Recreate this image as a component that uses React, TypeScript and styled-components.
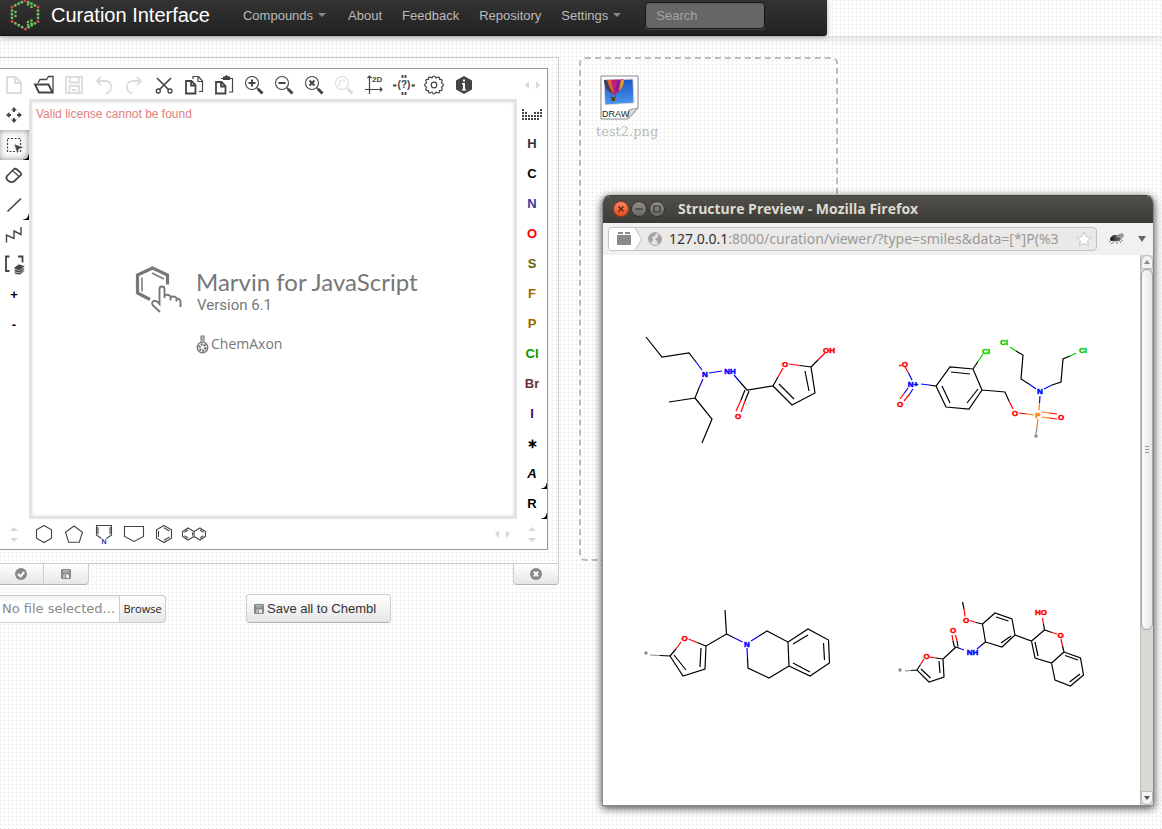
import React from "react";
import styled, { createGlobalStyle, css } from "styled-components";

const GlobalStyle = createGlobalStyle`
  * { box-sizing: border-box; }
  body {
    margin: 0;
    font: 13px/18px "Liberation Sans", Arial, sans-serif;
    color: #333;
    background-color: #fdfdfd;
    background-image:
      linear-gradient(90deg, transparent 1px, #fdfdfd 1px),
      linear-gradient(#dedede 1px, #fdfdfd 1px);
    background-size: 4px 4px;
  }
  button, input { font: inherit; color: inherit; }
  svg { display: block; }
`;

const Page = styled.div`
  position: relative;
  min-height: 100vh;
`;

/* ---------- Navigation ---------- */

const Header = styled.header`
  box-shadow: 0 3px 8px rgba(0, 0, 0, 0.12);
`;

const NavBar = styled.nav`
  display: flex;
  align-items: center;
  height: 36px;
  max-width: 827px;
  padding: 0 10px 5px 9px;
  background: linear-gradient(#333, #222);
  border-bottom: 1px solid #111;
  border-radius: 0 0 3px 0;
  box-shadow: 0 1px 5px rgba(0, 0, 0, 0.3);
`;

const Brand = styled.a`
  display: flex;
  align-items: center;
  gap: 9px;
  margin-right: 23px;
  font-size: 20px;
  line-height: 30px;
  color: #fff;
  text-decoration: none;
  white-space: nowrap;
`;

const NavLink = styled.a<{ $menu?: boolean }>`
  padding: 2px 10px 0;
  color: #bbb;
  text-decoration: none;
  ${(p) =>
    p.$menu &&
    css`
      margin-right: 2px;
      &::after {
        content: "";
        display: inline-block;
        margin-left: 5px;
        vertical-align: 3px;
        border: 4px solid transparent;
        border-top-color: #888;
        border-bottom: 0;
      }
    `}
`;

const SearchBox = styled.input`
  width: 120px;
  height: 27px;
  margin-left: 12px;
  padding: 0 10px;
  background: #666;
  border: 1px solid #151515;
  border-radius: 4px;
  box-shadow: inset 0 1px 2px rgba(0, 0, 0, 0.1), 0 1px 0 rgba(255, 255, 255, 0.15);
  &::placeholder { color: #a5a5a5; opacity: 1; }
`;

/* ---------- Workspace ---------- */

const Workspace = styled.main`
  display: flex;
  align-items: flex-start;
  gap: 20px;
  padding-top: 21px;
`;

const EditorColumn = styled.section`
  flex: 0 0 559px;
`;

const Frame = styled.div`
  padding: 10px 10px 13px 0;
  border: 1px solid #ccc;
  border-left: 0;
`;

const Sketcher = styled.div`
  display: grid;
  grid-template-columns: 30px 1fr 30px;
  grid-template-rows: 30px auto 30px;
  margin-left: -1px;
  background: #fff;
  border: 1px solid #999;
  border-left: 0;
`;

const ToolRow = styled.div<{ $top?: boolean }>`
  grid-column: 1 / -1;
  display: flex;
  align-items: center;
  padding-top: ${(p) => (p.$top ? "2px" : "0")};
`;

const ToolColumn = styled.div<{ $left?: boolean }>`
  display: flex;
  flex-direction: column;
  padding-top: ${(p) => (p.$left ? "1px" : "0")};
`;

const ToolButton = styled.button<{ $active?: boolean; $flyout?: boolean; $faded?: boolean; $tint?: string; $italic?: boolean }>`
  position: relative;
  display: flex;
  align-items: center;
  justify-content: center;
  flex: 0 0 30px;
  width: 30px;
  height: 30px;
  padding: 0;
  border: 0;
  background: transparent;
  font-weight: bold;
  font-style: ${(p) => (p.$italic ? "italic" : "normal")};
  color: ${(p) => p.$tint || (p.$faded ? "#dcdcdc" : "#444")};
  ${(p) =>
    p.$active &&
    css`
      background: #fafafa;
      border-radius: 0 0 8px 0;
      box-shadow: inset 0 0 6px #888;
    `}
  ${(p) =>
    p.$flyout &&
    css`
      &::after {
        content: "";
        position: absolute;
        right: 0;
        bottom: 0;
        width: 6px;
        height: 6px;
        background: radial-gradient(circle at 0 0, transparent 5px, #000 6px);
      }
    `}
`;

const Spacer = styled.span`
  flex: 1;
`;

const Canvas = styled.div`
  display: flex;
  flex-direction: column;
  height: 420px;
  padding: 3px 4px;
  border: 3px solid #e4e4e4;
  box-shadow: inset 0 0 3px #ddd;
`;

const LicenseNote = styled.p`
  margin: 0;
  font-size: 12px;
  line-height: 18px;
  color: #e08080;
`;

const Splash = styled.div`
  display: grid;
  grid-template-columns: 48px auto;
  column-gap: 13px;
  margin: 143px 0 0 99px;
  color: #777;
`;

const SplashTitle = styled.h1`
  margin: 0;
  font: 400 24px/32px Lato, sans-serif;
  white-space: nowrap;
`;

const SplashVersion = styled.div`
  padding-left: 1px;
  font: 15px/14px Roboto, sans-serif;
`;

const SplashMaker = styled.div`
  grid-column: 2;
  display: flex;
  align-items: center;
  gap: 2px;
  margin-top: 20px;
  font: 14px/20px "Open Sans", "Noto Sans", sans-serif;
`;

const FrameTabs = styled.div`
  display: flex;
  justify-content: space-between;
`;

const TabGroup = styled.div`
  display: flex;
`;

const TabButton = styled.button`
  display: flex;
  align-items: center;
  justify-content: center;
  width: 45px;
  height: 21px;
  padding: 0;
  color: #888;
  background: linear-gradient(#fff, #e6e6e6);
  border: 1px solid #ccc;
  border-width: 0 1px 1px 0;
  border-bottom-color: #b3b3b3;
  &:first-child { width: 44px; padding-right: 2px; }
  &:last-child { border-radius: 0 0 4px 0; }
  &:only-child { width: 46px; padding: 0; border-left-width: 1px; border-radius: 0 0 4px 4px; }
`;

const UploadRow = styled.form`
  display: flex;
  align-items: center;
  margin-top: 9px;
`;

const FileName = styled.input`
  width: 120px;
  height: 28px;
  padding: 0 0 0 2px;
  font: 13px/18px "DejaVu Sans", sans-serif;
  color: #888;
  background: linear-gradient(#f0f0f0, #fff 6px, #fff);
  border: 1px solid #ccc;
  border-left: 0;
  border-radius: 0;
`;

const BrowseButton = styled.button`
  width: 46px;
  height: 28px;
  padding: 0;
  font: 11px/18px "Open Sans", "Noto Sans", sans-serif;
  color: #222;
  background: linear-gradient(#fff, #e6e6e6);
  border: 1px solid #ccc;
  border-left: 0;
  border-radius: 0 4px 4px 0;
`;

const SaveButton = styled.button`
  display: flex;
  align-items: center;
  gap: 3px;
  width: 145px;
  height: 29px;
  margin-left: 80px;
  padding: 0 0 0 7px;
  background: linear-gradient(#fff, #e6e6e6);
  border: 1px solid #ccc;
  border-bottom-color: #b3b3b3;
  border-radius: 4px;
  svg { color: #888; }
`;

const DropZone = styled.section`
  flex: 0 0 259px;
  height: 504px;
  padding: 16px 14px;
  border: 2px dashed #bbb;
  border-radius: 6px;
`;

const FileTile = styled.figure`
  width: 64px;
  margin: 0;
  svg { margin-left: 5px; }
  figcaption {
    padding: 2px 0 0 1px;
    font: 13px/18px "DejaVu Serif", serif;
    color: #bbb;
    white-space: nowrap;
  }
`;

/* ---------- Preview window ---------- */

const Popup = styled.section`
  position: absolute;
  top: 195px;
  left: 602px;
  width: 552px;
  border: 1px solid #3c3b37;
  border-color: #3c3b37 #8a8985 #8a8985 #8a8985;
  border-radius: 8px 8px 0 0;
  background: #fff;
  box-shadow: 0 2px 9px rgba(0, 0, 0, 0.75);
`;

const TitleBar = styled.header`
  display: flex;
  align-items: center;
  gap: 2px;
  height: 27px;
  padding: 0 0 2px 10px;
  background: linear-gradient(#504f49, #3c3b37);
  border-radius: 7px 7px 0 0;
  h2 {
    margin: 0 0 0 11px;
    font: bold 14px/20px "Open Sans", "Noto Sans", sans-serif;
    color: #dfdbd2;
    white-space: nowrap;
  }
`;

const WindowButton = styled.button<{ $close?: boolean }>`
  display: flex;
  width: 16px;
  height: 16px;
  padding: 0;
  border: 1px solid ${(p) => (p.$close ? "#a03a1b" : "#33322e")};
  border-radius: 50%;
  color: ${(p) => (p.$close ? "#5a1d08" : "#33322e")};
  background: ${(p) => (p.$close ? "linear-gradient(#f58a66, #df4b1c)" : "linear-gradient(#8f8d85, #6a6962)")};
`;

const AddressBar = styled.div`
  display: flex;
  align-items: center;
  height: 32px;
  padding: 0 7px 0 5px;
  background: #f2f1f0;
`;

const AddressField = styled.div`
  display: flex;
  align-items: center;
  flex: 1;
  min-width: 0;
  height: 24px;
  padding-right: 4px;
  background: #ebe9e7;
  border: 1px solid #c6c3c0;
  border-radius: 4px;
  overflow: hidden;
`;

const Url = styled.span`
  flex: 1;
  padding-left: 4px;
  font: 14px/22px "Noto Sans", sans-serif;
  color: #999;
  white-space: nowrap;
  b { font-weight: normal; color: #333; }
`;

const IconButton = styled.button`
  display: flex;
  padding: 0;
  border: 0;
  background: transparent;
`;

const Viewer = styled.div`
  display: flex;
  height: 550px;
`;

const Structures = styled.div`
  flex: 1;
  display: grid;
  grid-template-columns: 250px 250px;
  grid-auto-rows: 250px;
  gap: 8px 2px;
  padding: 8px 0 0 12px;
`;

const ScrollBar = styled.div`
  display: flex;
  flex-direction: column;
  width: 13px;
  background: #dad8d5;
  border-left: 1px solid #bdbbb8;
`;

const ScrollArrow = styled.button<{ $down?: boolean }>`
  height: 14px;
  padding: 0;
  border: 1px solid #bdbbb8;
  border-radius: ${(p) => (p.$down ? "0 0 6px 6px" : "6px 6px 0 0")};
  background: #f4f3f2;
  display: flex;
  align-items: center;
  justify-content: center;
`;

const ScrollThumb = styled.div`
  display: flex;
  flex-direction: column;
  align-items: center;
  justify-content: center;
  gap: 2px;
  height: 361px;
  margin-bottom: auto;
  background: linear-gradient(90deg, #fbfbfa, #e8e6e4);
  border: 1px solid #a9a6a2;
  border-radius: 6px;
  i { width: 4px; height: 1px; background: #999; }
`;

/* ---------- Icons ---------- */

type IconProps = { children: React.ReactNode; size?: number; w?: number };

const Icon = ({ children, size = 24, w = 1.3 }: IconProps) => (
  <svg width={size} height={size} viewBox={`0 0 ${size} ${size}`} fill="none" stroke="currentColor" strokeWidth={w} aria-hidden="true">
    {children}
  </svg>
);

const lens = (
  <>
    <circle cx="10" cy="10" r="6.500" strokeWidth="1.100" />
    <path d="M16 16l4.500 4.500" strokeWidth="3" />
    <path d="M14.500 14.500l2 2" strokeWidth="1.300" />
  </>
);

const icons: Record<string, React.ReactNode> = {
  New: <Icon w={2}><path d="M5 4h8.500l5.500 5.500V20H5zM13 4v6h6" /></Icon>,
  Open: (
    <Icon w={1.3}>
      <path d="M6 10l2-3.500h6.500l2-3H21v15.500" />
      <path d="M3 11.500h13.500l4 8H7z" strokeWidth="1.900" />
    </Icon>
  ),
  Save: <Icon w={1.8}><path d="M4 4h16v16H4zM8 4v5.500h9V4M7.500 20v-7h9.500v7M10 17h4" /></Icon>,
  Undo: <Icon w={1.8}><path d="M9 4L5 8l4 4M5.500 8H13c4 0 6 2.500 6 6s-2 6-5 6" /></Icon>,
  Redo: <Icon w={1.8}><path d="M15 4l4 4-4 4M18.500 8H11c-4 0-6 2.500-6 6s2 6 5 6" /></Icon>,
  Cut: (
    <Icon w={1.6}>
      <path d="M5 5l11.500 11.500M19 5L7.500 16.500" />
      <circle cx="6.300" cy="18" r="2" strokeWidth="1.300" /><circle cx="18" cy="18" r="2" strokeWidth="1.300" />
    </Icon>
  ),
  Copy: (
    <Icon w={1.2}>
      <path d="M11 6V3.500h5.500l4 4.500v10.500H17M16 3.500V8.500h4.500" />
      <path d="M4 8h5.500l4 4v8.500H4zM9 8v4.500h4.500" strokeWidth="1.800" />
    </Icon>
  ),
  Paste: (
    <Icon w={1.2}>
      <path d="M9 5.500h2M18 5.500h2.500v13.500H17" />
      <path d="M11.500 4h1.500l1.500-1.200L16 4h1.500v2.500h-6z" fill="currentColor" />
      <path d="M4 9h5.500l4 4v7.500H4zM9 9v4.500h4.500" strokeWidth="1.800" />
    </Icon>
  ),
  "Zoom in": <Icon>{lens}<path d="M6.500 10h7M10 6.500v7" strokeWidth="2" /></Icon>,
  "Zoom out": <Icon>{lens}<path d="M6.500 10h7" strokeWidth="2" /></Icon>,
  "Zoom reset": <Icon>{lens}<path d="M7.500 7.500l5 5M12.500 7.500l-5 5" strokeWidth="2" /></Icon>,
  "Zoom selection": <Icon>{lens}<path d="M7.500 13V7.500H13" strokeDasharray="2 1" /></Icon>,
  "Clean 2D": (
    <Icon w={1.2}>
      <path d="M7.500 3v18M3 16.500h17M5.500 5l2-2 2 2M18 14.500l2 2-2 2" />
      <text x="10" y="9" fontSize="8" fontWeight="bold" fill="currentColor" stroke="none">2D</text>
    </Icon>
  ),
  Template: (
    <Icon w={1.8}>
      <path d="M10.500 2v3M13.500 2v3M10.500 19v3M13.500 19v3M1 12.500h3.500M19.500 12.500H23" />
      <text x="12" y="15" fontSize="10" fontWeight="bold" textAnchor="middle" fill="currentColor" stroke="none">(?)</text>
    </Icon>
  ),
  Settings: (
    <Icon w={1.2}>
      <circle cx="12" cy="12" r="2.800" />
      <path d="M10 5q2-4 4 0 4-2.500 3.500 1.500 4-.500 2 3.500 4 2 0 4 2 4-2 3.500.500 4-3.500 1.500-2 4-4 0-4 2.500-3.500-1.500-4 .500-2-3.500-4-2 0-4-2-4 2-3.500Q6 2.500 10 5z" />
    </Icon>
  ),
  About: (
    <Icon w={0}>
      <path d="M12 3l8 4.500v9L12 21l-8-4.500v-9z" fill="currentColor" />
      <path d="M10 10h3v6h1v1.500h-4V16h1v-4.500h-1zM11 6.500h2v2h-2z" fill="#fff" />
    </Icon>
  ),
  Move: (
    <Icon w={0}>
      <g fill="currentColor">
        <path d="M12 4l3 3.500h-6zM12 20l3-3.500h-6zM4 12l3.500-3v6zM20 12l-3.500-3v6z" />
        <path d="M11 7h2v2h-2zM11 15h2v2h-2zM7 11h2v2H7zM15 11h2v2h-2z" />
      </g>
    </Icon>
  ),
  Select: (
    <Icon w={1.2}>
      <path d="M5.500 5.500h13v13h-13z" strokeDasharray="2 1.500" />
      <path d="M12 11l10 3.500-5 1.500L15.500 21z" fill="currentColor" stroke="#fafafa" strokeWidth=".500" />
    </Icon>
  ),
  Erase: (
    <Icon w={1.7}>
      <path d="M5 13l6.500-6.500q1.500-1.500 3.500 0l3.500 3q1.500 1.500 0 3L12.500 18q-1.500 1.200-3 1.200-2 0-4-2-2-2-.500-4.200z" />
      <path d="M11 8l6 5.500" strokeWidth="1.100" />
    </Icon>
  ),
  Bond: <Icon w={1.6}><path d="M5.500 18.500L19 5.500" /></Icon>,
  Chain: <Icon w={1.4}><path d="M4.500 19.500v-7.500l7.500 3.500V8l7 3.500V4" /></Icon>,
  Group: (
    <Icon w={1.8}>
      <path d="M7.500 3.500H4V18h3.500M16 3.500h4.500v6" />
      <g fill="currentColor" stroke="#fff" strokeWidth=".600">
        <path d="M12 18.500l5-3 6 2-5 4.500-5-1z" />
        <path d="M12 16.500l5-3 6 2-5 4.500-5-1z" />
        <path d="M12 14.500l5-3.500 6 2-5 4.500-5-1z" />
      </g>
    </Icon>
  ),
  "Periodic table": (
    <Icon w={0}>
      <g fill="currentColor">
        {["1000001", "1100111", "1111111", "1111110"].flatMap((row, r) =>
          [...row].map((c, i) => c === "1" && <rect key={`${r}-${i}`} x={2 + i * 3} y={7 + r * 3} width="2" height="2" />)
        )}
      </g>
    </Icon>
  ),
};

const topTools: [string, boolean][] = [
  ["New", true], ["Open", false], ["Save", true], ["Undo", true], ["Redo", true], ["Cut", false], ["Copy", false], ["Paste", false],
  ["Zoom in", false], ["Zoom out", false], ["Zoom reset", false], ["Zoom selection", true], ["Clean 2D", false], ["Template", false],
  ["Settings", false], ["About", false],
];

const leftTools = ["Move", "Select", "Erase", "Bond", "Chain", "Group"];

const atoms: [string, string][] = [
  ["H", "#333"], ["C", "#000"], ["N", "#3040a0"], ["O", "#ff0000"], ["S", "#666600"], ["F", "#996600"], ["P", "#996600"],
  ["Cl", "#009900"], ["Br", "#663333"], ["I", "#4b0082"], ["∗", "#000"], ["A", "#000"], ["R", "#000"],
];

const rings: [string, React.ReactNode][] = [
  ["Cyclohexane", <path d="M12 3.500l7.500 4.300v8.500L12 20.500l-7.500-4.200V7.800z" />],
  ["Cyclopentane", <path d="M12 4l8.500 6.200-3.200 10H6.700l-3.200-10z" />],
  ["Pyrrole", <><path d="M9.500 16.500L4.500 13V3.500h15V13l-5 3.500M6 5v7M18 5v7" /><text x="12" y="22" fontSize="7" fontWeight="bold" textAnchor="middle" fill="#3030a0" stroke="none">N</text></>],
  ["Cyclopentane, flat", <path d="M2.500 4.500h19v10L12 19.500l-9.500-5z" />],
  ["Benzene", <path d="M12 3.500l7.500 4.300v8.500L12 20.500l-7.500-4.200V7.800zM6.500 9v6M12 5.800l5.500 3.100M12 18.200l5.500-3.100" />],
  ["Naphthalene", <path d="M6 6l6 3.500v5L6 18l-5.500-3.500v-5zM18 6l5.500 3.500v5L18 18l-6-3.500v-5zM2.500 10.200L6 8M2.500 13.800L6 16M18 8l3.500 2.200M18 16l3.500-2.200M10.500 10.500v3" />],
];

const SideArrows = () => <svg width="16" height="8" viewBox="0 0 16 8" fill="#d8d8d8" aria-hidden="true"><path d="M5 0v8L1 4zM12 0v8l4-4z" /></svg>;
const UpDownArrows = () => <svg width="8" height="16" viewBox="0 0 8 16" fill="#d8d8d8" aria-hidden="true"><path d="M0 5h8L4 1zM0 12h8l-4 4z" /></svg>;
const Disk = () => (
  <svg width="10" height="10" viewBox="0 0 10 10" aria-hidden="true">
    <path d="M1 0h8l1 1v8L9 10H1L0 9V1z" fill="currentColor" />
    <path d="M2 1.500h6M2 3h6" stroke="#ddd" strokeWidth=".600" /><path d="M2.500 5.500h5.500V9H2.500z" fill="#eee" /><path d="M3.500 6H5v3H3.500z" fill="currentColor" />
  </svg>
);
const Round = ({ d }: { d: string }) => (
  <svg width="12" height="12" viewBox="0 0 12 12" aria-hidden="true">
    <circle cx="6" cy="6" r="6" fill="currentColor" /><path d={d} fill="none" stroke="#fff" strokeWidth="2" />
  </svg>
);

const hexCorners = [[16, 1.5], [29, 8], [29, 22.5], [16.5, 30], [3, 22.5], [3, 8]];

const BrandMark = () => (
  <svg width="33" height="32" viewBox="0 0 33 32" aria-hidden="true">
    {hexCorners.map(([x, y], i) => {
      const [nx, ny] = hexCorners[(i + 1) % 6];
      return (
        <g key={i}>
          {[0.25, 0.5, 0.75].map((t) => <circle key={t} cx={x + (nx - x) * t} cy={y + (ny - y) * t} r="1.400" fill="#72c05e" />)}
          <circle cx={x} cy={y} r="1.500" fill="#e0454f" />
        </g>
      );
    })}
    {[[6.5, 13], [6.5, 17], [19, 5.5], [22.5, 8], [19, 26], [22.5, 24.5], [19, 23], [22.5, 21.5]].map(([x, y]) => (
      <circle key={`${x}-${y}`} cx={x} cy={y} r="1.300" fill="#72c05e" />
    ))}
  </svg>
);

const Thumbnail = () => (
  <svg width="40" height="46" viewBox="0 0 40 46" aria-hidden="true">
    <defs>
      <linearGradient id="sky" x1="0" y1="0" x2="0" y2="1"><stop offset="0" stopColor="#1c57c4" /><stop offset="1" stopColor="#4a96ee" /></linearGradient>
      <clipPath id="photo"><path d="M4 5l29-1 1 24-29 2z" /></clipPath>
    </defs>
    <path d="M1 1h37v32L28 44H1z" fill="#fff" stroke="#888" />
    <path d="M38 33L28 44l1-9z" fill="#ddd" stroke="#999" />
    <path d="M4 5l29-1 1 24-29 2z" fill="url(#sky)" stroke="#ddd" />
    <g clipPath="url(#photo)">
      <path d="M4 4h19.500q1 7-4 12l-5 4q-7-3-9-8z" fill="#c0207c" />
      <path d="M4 5h5l5 14q-7-3-9-8z" fill="#39405c" /><path d="M7 5h4l3 14q-4-4-7-14z" fill="#e0622c" />
      <path d="M17 5h3q0 8-5 14z" fill="#7b1fa0" /><path d="M21 5h3q0 7-5 11z" fill="#d8a02c" />
    </g>
    <path d="M11 20l1 3h3l1-3" fill="none" stroke="#443" strokeWidth=".700" /><path d="M11.500 22h3.500v4h-3.500z" fill="#5a4418" />
    <text x="2" y="42" fontFamily="Liberation Sans" fontSize="9" fill="#222">DRAW</text>
  </svg>
);

/* ---------- Structure drawings ---------- */

type Label = [string, number, number, string];
type Molecule = { name: string; paths: [string, string][]; labels: Label[]; dot?: [number, number] };

const K = "#000", N = "#00f", O = "#f00", G = "#0c0", P = "#ff8000", Y = "#888";

const molecules: Molecule[] = [
  {
    name: "Hydroxyfuran hydrazide",
    paths: [
      [K, "M31 74L47 94L74 90L81 99M84 125L80 135L54 139M80 135L97 156L87 180M125 119L132 127L158 123L177 142L200 130L196 104L185 102.500M158 123L163 114M164 121L179 136M190 108L194 128M196 104L203 97M130 127L126 137M134 128L130 138"],
      [N, "M81 99L87 107M88 116L84 125M94 110L107 108M119 112L125 119"],
      [O, "M163 114L168 105M185 102.500L174 101M203 97L210 90M126 137L121 148M130 138L126 149"],
    ],
    labels: [["N", 90, 111, N], ["NH", 115, 107.5, N], ["O", 123, 153, O], ["O", 170, 101, O], ["OH", 214, 87, O]],
  },
  {
    name: "Nitrobenzyl phosphoramidate",
    paths: [
      [K, "M62 122L69 123L83 104L106 106L115 127L102 146L79 144L69 123M84 109L103 111M111 126L100 140M75 123L83 140M106 106L111 98.500M115 127L138 129L142 138M162 121L154 116L156 92L149 88M185 122L194 119L196 96L203 93"],
      [N, "M54 121L62 122M45 117L41.500 110M41 125L37 130.500M46 126L42 132M172.500 140L173 133M169 126L162 121M177 126L185 122"],
      [O, "M41.500 110L38 104M37 130.500L33 136M42 132L37 138M142 138L146 146M152 150L160 151M182 150L190 151M182 155L190 156"],
      [P, "M160 151L167 152M175 149L182 150M175 154L182 155M172 147L172.500 140M171 156L170 164"],
      [G, "M111 98.500L116 91M149 88L143 84M203 93L209 90"],
      [Y, "M170 164L169 171"],
    ],
    labels: [["-O", 36.5, 101, O], ["N+", 46, 121, N], ["O", 33, 141, O], ["Cl", 119, 88, G], ["Cl", 137, 79, G], ["Cl", 216, 87, G], ["N", 173, 128, N], ["O", 148, 150, O], ["P", 171, 152, P], ["O", 194, 154, O]],
    dot: [169, 173],
  },
  {
    name: "Furyl tetrahydroisoquinoline",
    paths: [
      [K, "M45 134.500L55 135L68 155L90 148L91 125L111.500 113L110 89M111.500 113L119.500 117M61 128L55 135M59 134L71 149M85 146L86 127M91 125L82 121.500M144 115L152 110L173 121L174 145L154 157L133 147L132.500 137M173 121L193 108L213.500 119L214.500 142L195 155L174 145M178 123L193 114M208.500 122L209.500 139M178 142L195 151"],
      [N, "M119.500 117L127.500 121M136 120L144 115M132.500 137L132 127"],
      [O, "M61 128L66 121M82 121.500L73.500 118"],
      [Y, "M35 134L45 134.500"],
    ],
    labels: [["O", 69.5, 117, O], ["N", 132, 123, N]],
    dot: [31, 132],
  },
  {
    name: "Furamide chromene",
    paths: [
      [K, "M44 149.500L50 149L62 161L77 156L76 138L89 126L93 127.500M50 149L53.500 143.500M76 138L69 137M54 148L63.500 157M73 152L72 140M87.500 126L86 120M91 125.500L90 120M114 124.500L118.500 121L115.500 103L128 92L145 98L148 114L135 126L118.500 121M129 96L141.500 100M144 115L134 122M115.500 103L109 101.500M95.500 81L97 88M148 114L164.500 120L177.500 109L185 111.500M177.500 109L176.500 103M197 131L184.500 142L168 137L164.500 120M168 121L171 135M197 131L195.500 125M197 131L213.500 137L216.500 154L203.500 165L188 159L184.500 142M198 134.500L211 139M213 153L202.500 161"],
      [N, "M93 127.500L97 129M110 128L114 124.500"],
      [O, "M53.500 143.500L57 138M69 137L62.500 136M86 120L85 114M90 120L88.500 114M109 101.500L102.500 99.500M97 88L98 95.500M185 111.500L190 113M176.500 103L175.500 97M195.500 125L194 118"],
      [Y, "M38 150L44 149.500"],
    ],
    labels: [["O", 59.5, 135, O], ["O", 86, 109, O], ["NH", 105.5, 131, N], ["O", 99, 99, O], ["O", 193.5, 114, O], ["HO", 174, 91, O]],
    dot: [33, 149],
  },
];

const MoleculeView = ({ m }: { m: Molecule }) => (
  <svg width="250" height="250" viewBox="0 0 250 250" fill="none" role="img" aria-label={m.name}>
    {m.paths.map(([c, d]) => <path key={c} d={d} stroke={c} strokeWidth="1.200" />)}
    {m.labels.map(([t, x, y, c], i) => (
      <text key={i} x={x} y={y + 3} fontSize="8" fontWeight="bold" textAnchor="middle" fill={c} stroke={c} strokeWidth=".500">{t}</text>
    ))}
    {m.dot && <circle cx={m.dot[0]} cy={m.dot[1]} r="1.700" fill={Y} />}
  </svg>
);

/* ---------- Page ---------- */

export default function App() {
  return (
    <Page>
      <GlobalStyle />
      <Header>
        <NavBar>
          <Brand href="#"><BrandMark />Curation Interface</Brand>
          <NavLink href="#" $menu>Compounds</NavLink>
          <NavLink href="#">About</NavLink>
          <NavLink href="#">Feedback</NavLink>
          <NavLink href="#">Repository</NavLink>
          <NavLink href="#" $menu>Settings</NavLink>
          <SearchBox type="search" placeholder="Search" aria-label="Search" />
        </NavBar>
      </Header>

      <Workspace>
        <EditorColumn>
          <Frame>
            <Sketcher>
              <ToolRow $top>
                {topTools.map(([name, faded]) => (
                  <ToolButton key={name} aria-label={name} $faded={faded}>{icons[name]}</ToolButton>
                ))}
                <Spacer />
                <ToolButton aria-label="Scroll toolbar"><SideArrows /></ToolButton>
              </ToolRow>

              <ToolColumn $left>
                {leftTools.map((name) => (
                  <ToolButton key={name} aria-label={name} $active={name === "Select"} $flyout={name === "Select" || name === "Bond"}>{icons[name]}</ToolButton>
                ))}
                <ToolButton $tint="#000">+</ToolButton>
                <ToolButton $tint="#000">-</ToolButton>
              </ToolColumn>

              <Canvas>
                <LicenseNote>Valid license cannot be found</LicenseNote>
                <Splash>
                  <svg width="48" height="48" viewBox="0 0 48 48" fill="none" stroke="#777" aria-hidden="true">
                    <path d="M15 33.500L2.500 27V9L17.500 2l15 7v9.500" strokeWidth="3.200" />
                    <path d="M7 11.500v14M17 7l12 6" strokeWidth="1.500" />
                    <path d="M25 46l-7-6.500q-2-3 .500-4.500 3-1 6 3V23q0-2.500 2.500-2.500T29.500 23v9M29.500 29.500q4-2 6 1v4M35.500 31q4-1.500 6 1v3.500M41.500 33q3-1 4 2v6" strokeWidth="1.900" />
                  </svg>
                  <div>
                    <SplashTitle>Marvin for JavaScript</SplashTitle>
                    <SplashVersion>Version 6.1</SplashVersion>
                  </div>
                  <SplashMaker>
                    <svg width="13" height="19" viewBox="0 0 13 19" fill="none" stroke="#777" aria-hidden="true">
                      <path d="M4.500 1h4M5 1v6M8 1v6M5 3h3M5 5h3" />
                      <circle cx="6.500" cy="12.500" r="5.300" strokeWidth="1.300" />
                      <circle cx="6.500" cy="12.500" r="3" strokeWidth="2.500" strokeDasharray="2 1" />
                    </svg>
                    ChemAxon
                  </SplashMaker>
                </Splash>
              </Canvas>

              <ToolColumn>
                <ToolButton aria-label="Periodic table">{icons["Periodic table"]}</ToolButton>
                {atoms.map(([symbol, tint]) => (
                  <ToolButton key={symbol} $tint={tint} $italic={symbol === "A"} $flyout={symbol === "A" || symbol === "R"}>{symbol}</ToolButton>
                ))}
              </ToolColumn>

              <ToolRow>
                <ToolButton aria-label="Scroll tools"><UpDownArrows /></ToolButton>
                {rings.map(([name, shape]) => (
                  <ToolButton key={name} aria-label={name}><Icon w={1.1}>{shape}</Icon></ToolButton>
                ))}
                <Spacer />
                <ToolButton aria-label="Scroll templates"><SideArrows /></ToolButton>
                <ToolButton aria-label="Scroll atoms"><UpDownArrows /></ToolButton>
              </ToolRow>
            </Sketcher>
          </Frame>

          <FrameTabs>
            <TabGroup>
              <TabButton aria-label="Accept"><Round d="M3 6l2.500 2.500L9.200 4" /></TabButton>
              <TabButton aria-label="Save"><Disk /></TabButton>
            </TabGroup>
            <TabGroup>
              <TabButton aria-label="Clear"><Round d="M3.800 3.800l4.400 4.400M8.200 3.800L3.800 8.200" /></TabButton>
            </TabGroup>
          </FrameTabs>

          <UploadRow>
            <FileName type="text" readOnly value="No file selected..." aria-label="Selected file" />
            <BrowseButton type="button">Browse</BrowseButton>
            <SaveButton type="button"><Disk />Save all to Chembl</SaveButton>
          </UploadRow>
        </EditorColumn>

        <DropZone aria-label="Dropped files">
          <FileTile>
            <Thumbnail />
            <figcaption>test2.png</figcaption>
          </FileTile>
        </DropZone>
      </Workspace>

      <Popup aria-label="Structure Preview">
        <TitleBar>
          <WindowButton $close aria-label="Close"><Icon size={14} w={1.2}><path d="M4.500 4.500l5 5M9.500 4.500l-5 5" /></Icon></WindowButton>
          <WindowButton aria-label="Minimize"><Icon size={14} w={1.2}><path d="M3.500 7h7" /></Icon></WindowButton>
          <WindowButton aria-label="Maximize"><Icon size={14} w={1.2}><path d="M4 4h6v6H4z" /></Icon></WindowButton>
          <h2>Structure Preview - Mozilla Firefox</h2>
        </TitleBar>
        <AddressBar>
          <AddressField>
            <svg width="56" height="22" viewBox="0 0 56 22" aria-hidden="true">
              <path d="M0 0h26l6.500 11L26 22H0z" fill="#fff" /><path d="M26 0l6.500 11L26 22" fill="none" stroke="#c6c3c0" />
              <path d="M8 7h14v10H8zM9 4h5v2H9zM16 4h5v2h-5z" fill="#8a8a8a" />
              <circle cx="46" cy="11" r="6.500" fill="#e4e4e4" stroke="#aaa" strokeWidth="1" />
              <path d="M40 8q3-4 7-3l-1 3-3 1 1 3-2 3q-3-3-2-7zM48 6l4 3v5l-3 3-1-4-2-2 3-2z" fill="#a2a2a2" />
            </svg>
            <Url><b>127.0.0.1</b>:8000/curation/viewer/?type=smiles&amp;data=[*]P(%3</Url>
            <IconButton aria-label="Bookmark">
              <svg width="16" height="16" viewBox="0 0 16 16" fill="#fff" stroke="#c4c4c4" aria-hidden="true"><path d="M8 1l2.200 4.700 5 .600-3.700 3.500 1 5L8 12.300l-4.500 2.500 1-5L.800 6.300l5-.600z" /></svg>
            </IconButton>
          </AddressField>
          <IconButton aria-label="Debugger">
            <svg width="41" height="16" viewBox="0 0 41 16" aria-hidden="true">
              <path d="M12 11l5-3M14 13l4-3M20 13v-3M24 12l-2-3M26 10l-3-2" stroke="#666" strokeWidth=".800" />
              <ellipse cx="18" cy="7" rx="4" ry="3" fill="#444" transform="rotate(-12 18 7)" />
              <ellipse cx="23" cy="5.500" rx="4" ry="2.600" fill="#999" transform="rotate(-30 23 5.500)" />
              <circle cx="15" cy="8" r="2" fill="#222" /><circle cx="21" cy="8" r="2" fill="#555" />
            </svg>
          </IconButton>
          <IconButton aria-label="More">
            <svg width="8" height="6" viewBox="0 0 8 6" fill="#666" aria-hidden="true"><path d="M0 0h8L4 6z" /></svg>
          </IconButton>
        </AddressBar>
        <Viewer>
          <Structures>
            {molecules.map((m) => <MoleculeView key={m.name} m={m} />)}
          </Structures>
          <ScrollBar>
            <ScrollArrow aria-label="Scroll up"><svg width="6" height="4" viewBox="0 0 6 4" fill="#888" aria-hidden="true"><path d="M0 4h6L3 0z" /></svg></ScrollArrow>
            <ScrollThumb><i /><i /><i /></ScrollThumb>
            <ScrollArrow $down aria-label="Scroll down"><svg width="6" height="4" viewBox="0 0 6 4" fill="#555" aria-hidden="true"><path d="M0 0h6L3 4z" /></svg></ScrollArrow>
          </ScrollBar>
        </Viewer>
      </Popup>
    </Page>
  );
}
